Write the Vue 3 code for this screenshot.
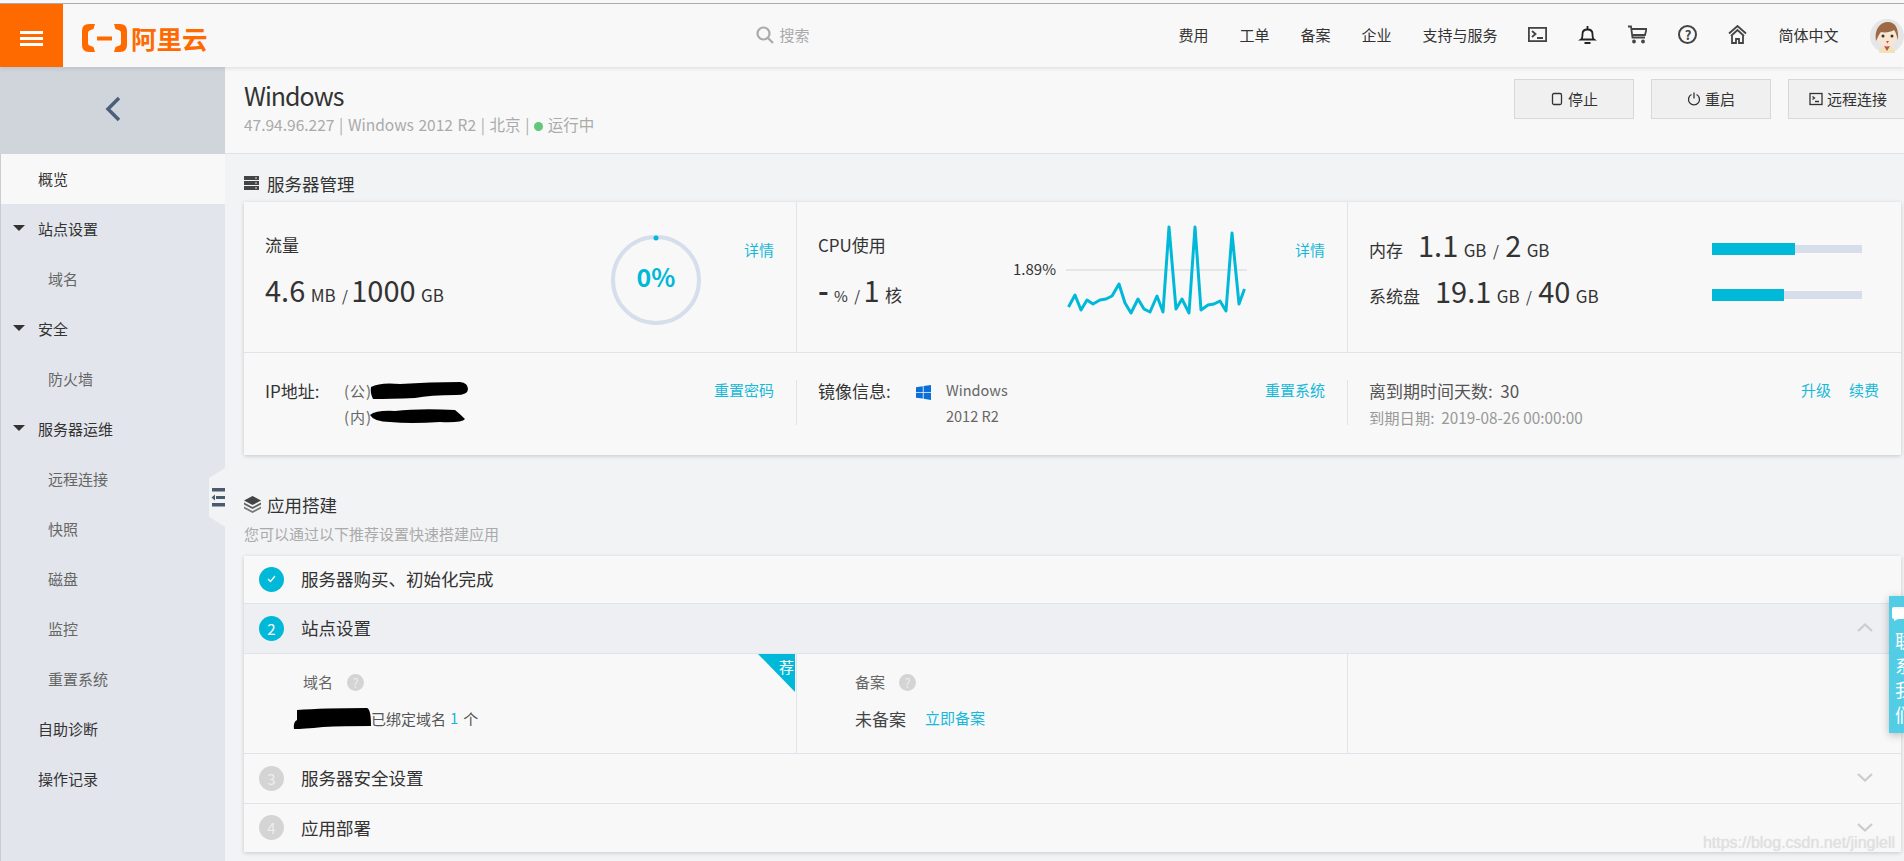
<script setup>
const nav = ['费用', '工单', '备案', '企业', '支持与服务']

const menu = [
  { name: '概览', type: 'top', active: true },
  { name: '站点设置', type: 'group' },
  { name: '域名', type: 'sub' },
  { name: '安全', type: 'group' },
  { name: '防火墙', type: 'sub' },
  { name: '服务器运维', type: 'group' },
  { name: '远程连接', type: 'sub' },
  { name: '快照', type: 'sub' },
  { name: '磁盘', type: 'sub' },
  { name: '监控', type: 'sub' },
  { name: '重置系统', type: 'sub' },
  { name: '自助诊断', type: 'top' },
  { name: '操作记录', type: 'top' }
]

// cpu samples, read off the chart
const cpu = [
  [8.5, 87], [15, 75], [21, 90], [27, 80], [33, 84], [40, 80], [46, 79], [52, 76],
  [59, 64], [65, 83], [71, 93], [78, 79], [84, 89], [90, 92], [97, 76], [103, 92],
  [109, 7], [116, 89], [122, 79], [129, 93], [135, 7], [141, 90], [148, 85], [154, 84],
  [160, 81], [166, 91], [172, 13], [179, 84], [184.500, 69]
]
const cpuPoints = cpu.map(p => p.join(',')).join(' ')

const usage = [
  { label: '内存', used: '1.1', total: '2', percent: 55.4 },
  { label: '系统盘', used: '19.1', total: '40', percent: 47.8 }
]
</script>

<template>
  <div class="page">
    <header class="topbar">
      <div class="burger"><i></i><i></i><i></i></div>
      <div class="logo">
        <svg width="45" height="28" viewBox="0 0 45 28">
          <path d="M13 0H7Q0 0 0 7V21Q0 28 7 28H13L11.500 23 7.500 21.500Q6 21 6 19V9Q6 7 7.500 6.500L11.500 5Z" fill="#ff6a00" />
          <path d="M32 0H38Q45 0 45 7V21Q45 28 38 28H32L33.500 23 37.500 21.500Q39 21 39 19V9Q39 7 37.500 6.500L33.500 5Z" fill="#ff6a00" />
          <rect x="15" y="12.500" width="15" height="4" fill="#ff6a00" />
        </svg>
        <span class="logo-text">阿里云</span>
      </div>
      <div class="search">
        <svg width="18" height="18" viewBox="0 0 18 18" fill="none" stroke="#aaa" stroke-width="2.200">
          <circle cx="7.500" cy="7.500" r="6" />
          <path d="M12 12l5 5" />
        </svg>
        <span>搜索</span>
      </div>
      <nav class="nav">
        <a v-for="item in nav" :key="item">{{ item }}</a>
        <svg width="19" height="15" viewBox="0 0 19 15" fill="none" stroke="#444" stroke-width="1.800">
          <rect x="0.900" y="0.900" width="17.200" height="13.200" />
          <path d="M4 4l3.500 3L4 10M9 11h6" />
        </svg>
        <svg width="19" height="19" viewBox="0 0 19 19" fill="none" stroke="#222" stroke-width="1.800">
          <path d="M3 14.500c1.500-1 1.500-2 1.500-5.500 0-3 2-4.500 5-4.500s5 1.500 5 4.500c0 3.500 0 4.500 1.500 5.500z" />
          <path d="M9.500 1v3M6.500 18h6" />
        </svg>
        <svg width="19" height="19" viewBox="0 0 19 19" fill="none" stroke="#444" stroke-width="1.800">
          <path d="M0 1.500h3l1.500 11h12.500M4 4h14.500l-1.500 6H5" />
          <circle cx="6" cy="16.500" r="1" fill="#444" />
          <circle cx="15" cy="16.500" r="1" fill="#444" />
        </svg>
        <span class="help">?</span>
        <svg width="19" height="19" viewBox="0 0 19 19" fill="none" stroke="#444" stroke-width="1.800">
          <path d="M1 8.500L9.500 1 18 8.500M3 11l6.500-6 6.500 6" />
          <path d="M4 11v7h4v-4h3v4h4v-7" />
        </svg>
        <a>简体中文</a>
        <svg class="avatar" width="34" height="34" viewBox="0 0 34 34">
          <circle cx="17" cy="17" r="17" fill="#e6e6e6" />
          <path d="M9 34c0-5 4-7 8-7s8 2 8 7z" fill="#f2e2b8" />
          <path d="M14 27l3 5 3-5z" fill="#c0504d" />
          <ellipse cx="17" cy="17" rx="10" ry="10.500" fill="#f8e6d2" />
          <path d="M6 22C4 8 12 3 18 3c7 0 11 6 10 18-1-3-2-8-4-10-3 2-9 3-13 2-2 2-3 5-5 9z" fill="#9c6b45" />
          <circle cx="13" cy="17" r="1.500" fill="#333" />
          <circle cx="22" cy="17" r="1.500" fill="#333" />
          <path d="M16 22h3l-1.500 2.500z" fill="#c0504d" />
        </svg>
      </nav>
    </header>

    <div class="layout">
      <aside class="sidebar">
        <div class="side-head">
          <svg width="18" height="26" viewBox="0 0 18 26" fill="none" stroke="#4c5f7a" stroke-width="3.500">
            <path d="M15 2L4 13l11 11" />
          </svg>
        </div>
        <div
          v-for="item in menu"
          :key="item.name"
          :class="['menu-item', item.type, { active: item.active }]"
        >
          <i v-if="item.type === 'group'" class="caret"></i>
          {{ item.name }}
        </div>
        <div class="collapse">
          <svg width="16" height="20" viewBox="0 0 16 20" fill="#4c5a70">
            <rect x="3" y="0" width="13" height="3.500" />
            <rect x="7" y="8" width="9" height="3" />
            <path d="M6 6.500v6L2.500 9.500z" />
            <rect x="3" y="15" width="13" height="3.500" />
          </svg>
        </div>
      </aside>

      <main class="main">
        <div class="page-head">
          <div>
            <h1 class="title">Windows</h1>
            <div class="meta">
              47.94.96.227 | Windows 2012 R2 | 北京 | <i class="dot"></i> 运行中
            </div>
          </div>
          <div class="actions">
            <button class="btn">
              <svg width="14" height="14" viewBox="0 0 14 14" fill="none" stroke="#333" stroke-width="1.300">
                <rect x="2.500" y="1.500" width="9" height="11" rx="1.500" />
              </svg>
              停止
            </button>
            <button class="btn">
              <svg width="14" height="14" viewBox="0 0 14 14" fill="none" stroke="#333" stroke-width="1.300">
                <path d="M4.500 2.500a5.500 5.500 0 1 0 5 0M7 0.500v6" />
              </svg>
              重启
            </button>
            <button class="btn">
              <svg width="14" height="14" viewBox="0 0 14 14" fill="none" stroke="#333" stroke-width="1.300">
                <rect x="1" y="1.500" width="12" height="11" />
                <path d="M3.500 4.500l2 1.500-2 1.500M6 9.500h4" />
              </svg>
              远程连接
            </button>
          </div>
        </div>

        <div class="content">
          <div class="section-head">
            <svg width="15" height="14" viewBox="0 0 15 14" fill="#444">
              <rect x="0" y="0" width="15" height="4" />
              <rect x="0" y="5" width="15" height="4" />
              <rect x="0" y="10" width="15" height="4" />
              <rect x="11" y="1.500" width="2" height="1" fill="#ddd" />
              <rect x="11" y="6.500" width="2" height="1" fill="#ddd" />
              <rect x="11" y="11.500" width="2" height="1" fill="#ddd" />
            </svg>
            服务器管理
          </div>

          <section class="card">
            <div class="card-row stats">
              <div class="cell">
                <div class="cell-main">
                  <div class="cell-label">流量</div>
                  <div class="value">
                    <b>4.6</b> <small>MB</small> <em>/</em> <b>1000</b> <small>GB</small>
                  </div>
                </div>
                <div class="ring">
                  <svg width="90" height="90" viewBox="0 0 90 90">
                    <circle cx="45" cy="45" r="43" fill="none" stroke="#d6deeb" stroke-width="4" />
                    <circle cx="45" cy="3" r="2.500" fill="#00b9d8" />
                  </svg>
                  <span>0%</span>
                </div>
                <a class="link detail">详情</a>
              </div>

              <div class="cell">
                <div class="cell-main">
                  <div class="cell-label">CPU使用</div>
                  <div class="value">
                    <b class="dash">-</b> <small class="pct">%</small> <em>/</em> <b>1</b> <small>核</small>
                  </div>
                </div>
                <span class="cpu-label">1.89%</span>
                <svg class="cpu-chart" width="190" height="100" viewBox="0 0 190 100" fill="none">
                  <path d="M6 50h181" stroke="#e6e6e6" stroke-width="2" />
                  <polyline :points="cpuPoints" stroke="#00b9d8" stroke-width="3" stroke-linejoin="round" />
                </svg>
                <a class="link detail">详情</a>
              </div>

              <div class="cell usage">
                <div v-for="row in usage" :key="row.label" class="usage-row">
                  <div class="value">
                    <span class="usage-label">{{ row.label }}</span>
                    <b>{{ row.used }}</b> <small>GB</small> <em>/</em> <b>{{ row.total }}</b> <small>GB</small>
                  </div>
                  <div class="track">
                    <div class="fill" :style="{ width: row.percent + '%' }"></div>
                  </div>
                </div>
              </div>
            </div>

            <div class="card-row infos">
              <div class="info">
                <span class="info-label ip">IP地址:</span>
                <div class="ip-lines">
                  <div class="ip-line">
                    (公)
                    <svg width="98" height="18" viewBox="0 0 98 18">
                      <path d="M1 6Q10 1 30 3 60 1 90 1 98 2 98 8 98 14 86 14 60 14 45 17 20 18 3 18 0 12 1 6Z" fill="#000" />
                    </svg>
                  </div>
                  <div class="ip-line">
                    (内)
                    <svg width="95" height="16" viewBox="0 0 95 16">
                      <path d="M0 7Q6 2 25 3 50 0 85 2 90 6 95 11 92 15 70 14 40 16 20 14 4 14 0 7Z" fill="#000" />
                    </svg>
                  </div>
                </div>
                <a class="link">重置密码</a>
              </div>
              <div class="info">
                <span class="info-label image">镜像信息:</span>
                <svg class="win" width="15" height="15" viewBox="0 0 15 15" fill="#0a6fd8">
                  <path d="M0 2.200L6.800 1.200V7H0zM7.600 1.100L15 0V7H7.600zM0 7.800H6.800V13.600L0 12.700zM7.600 7.800H15V15L7.600 13.800z" />
                </svg>
                <div class="image-name">
                  <div>Windows</div>
                  <div>2012 R2</div>
                </div>
                <a class="link">重置系统</a>
              </div>
              <div class="info">
                <div class="expire">
                  <div class="expire-days">离到期时间天数:&nbsp;&nbsp;30</div>
                  <div class="expire-date">到期日期:&nbsp;&nbsp;2019-08-26 00:00:00</div>
                </div>
                <a class="link">升级</a>
                <a class="link renew">续费</a>
              </div>
            </div>
          </section>

          <div class="section-head second">
            <svg width="17" height="17" viewBox="0 0 17 17" fill="#444">
              <path d="M8.500 0L17 4.500 8.500 9 0 4.500z" />
              <path d="M0 6.500l8.500 4.500L17 6.500v2L8.500 13 0 8.500z" opacity=".85" />
              <path d="M0 10.500L8.500 15 17 10.500v2L8.500 17 0 12.500z" opacity=".7" />
            </svg>
            应用搭建
          </div>
          <p class="section-sub">您可以通过以下推荐设置快速搭建应用</p>

          <section class="steps">
            <div class="step first">
              <span class="badge">
                <svg width="9" height="8" viewBox="0 0 9 8" fill="none" stroke="#fff" stroke-width="1.300">
                  <path d="M1 4l2.500 2.500L8 1" />
                </svg>
              </span>
              服务器购买、初始化完成
            </div>
            <div class="step open">
              <span class="badge">2</span>
              站点设置
              <svg class="chevron" width="16" height="9" viewBox="0 0 16 9" fill="none" stroke="#ccc" stroke-width="2.200">
                <path d="M1 8l7-6.500L15 8" />
              </svg>
            </div>
            <div class="step-body">
              <div class="pane domain">
                <div class="pane-title">域名 <span class="tip">?</span></div>
                <div class="pane-line">
                  <svg class="blob" width="78" height="21" viewBox="0 0 78 21">
                    <path d="M4 2Q30 0 74 0 78 1 78 18 50 18 30 19 10 21 1 21 0 14 4 12Z" fill="#000" />
                  </svg>
                  <span>已绑定域名</span>
                  <a class="link count">1</a>
                  <span>个</span>
                </div>
                <div class="corner"><span>荐</span></div>
              </div>
              <div class="pane record">
                <div class="pane-title">备案 <span class="tip">?</span></div>
                <div class="pane-line">
                  <span class="status">未备案</span>
                  <a class="link">立即备案</a>
                </div>
              </div>
              <div class="pane"></div>
            </div>
            <div class="step idle">
              <span class="badge">3</span>
              服务器安全设置
              <svg class="chevron" width="16" height="9" viewBox="0 0 16 9" fill="none" stroke="#ccc" stroke-width="2.200">
                <path d="M1 1l7 6.500L15 1" />
              </svg>
            </div>
            <div class="step idle last">
              <span class="badge">4</span>
              应用部署
              <svg class="chevron" width="16" height="9" viewBox="0 0 16 9" fill="none" stroke="#ccc" stroke-width="2.200">
                <path d="M1 1l7 6.500L15 1" />
              </svg>
            </div>
          </section>
        </div>
      </main>
    </div>

    <div class="contact">
      <div class="contact-inner">
        <svg width="18" height="14" viewBox="0 0 18 14" fill="#fff">
          <path d="M2 0h14q2 0 2 2v8q0 2-2 2H6l-4 2v-2q-2 0-2-2V2q0-2 2-2z" />
        </svg>
        <span>联</span><span>系</span><span>我</span><span>们</span>
      </div>
    </div>
    <div class="watermark">https://blog.csdn.net/jinglell</div>
  </div>
</template>

<style>
html, body {
  margin: 0;
  overflow: hidden;
}
</style>

<style scoped>
.page {
  position: relative;
  width: 1904px;
  height: 861px;
  overflow: hidden;
  background: #f2f3f5;
  color: #333;
  font-family: "Noto Sans CJK SC", "Noto Sans", sans-serif;
  font-size: 15px;
}

.topbar {
  position: relative;
  z-index: 2;
  display: flex;
  align-items: center;
  box-sizing: border-box;
  height: 67px;
  padding: 4px 0 2px;
  background: linear-gradient(#f8f8f8 3px, #aaa 3px, #aaa 4px, #f8f8f8 4px);
  box-shadow: 0 1px 5px rgba(0, 0, 0, 0.12);
}

.burger {
  display: flex;
  flex-direction: column;
  justify-content: center;
  gap: 3px;
  align-self: stretch;
  width: 63px;
  margin-bottom: -2px;
  padding: 6px 0 0 20px;
  box-sizing: border-box;
  background: #ff6a00;
}

.burger i {
  display: block;
  width: 23px;
  height: 3px;
  background: #fff;
}

.logo {
  display: flex;
  align-items: center;
  gap: 4px;
  margin: 7px 0 0 19px;
}

.logo-text {
  color: #ff6a00;
  font-size: 25.500px;
  font-weight: 700;
  line-height: 28px;
}

.search {
  display: flex;
  align-items: center;
  gap: 6px;
  margin-left: 548px;
  color: #aaa;
}

.nav {
  display: flex;
  align-items: center;
  gap: 31px;
  margin-left: auto;
  color: #333;
}

.help {
  box-sizing: border-box;
  width: 19px;
  height: 19px;
  border: 2px solid #444;
  border-radius: 50%;
  font-size: 13px;
  font-weight: 700;
  line-height: 15px;
  text-align: center;
  color: #444;
}

.avatar {
  margin: 3px 0 0 0.500px;
}

.layout {
  display: flex;
  height: 794px;
}

.sidebar {
  position: relative;
  flex: none;
  box-sizing: border-box;
  width: 225px;
  border-left: 1px solid #c9cdd3;
  background: #e2e5eb;
}

.side-head {
  display: flex;
  align-items: center;
  justify-content: center;
  box-sizing: border-box;
  height: 87px;
  margin-left: -1px;
  padding-bottom: 3px;
  background: #d0d5dc;
}

.menu-item {
  display: flex;
  align-items: center;
  box-sizing: border-box;
  height: 50px;
  padding: 0 0 2px 37px;
}

.menu-item.active {
  background: #f8f8f8;
}

.menu-item.group {
  padding-left: 12px;
}

.menu-item.sub {
  padding-left: 47px;
  color: #666;
}

.caret {
  width: 0;
  height: 0;
  margin-right: 13px;
  border-top: 6px solid #333;
  border-left: 6px solid transparent;
  border-right: 6px solid transparent;
}

.collapse {
  position: absolute;
  top: 401px;
  right: 0;
  display: flex;
  align-items: center;
  justify-content: flex-end;
  width: 16px;
  height: 59px;
  background: #f2f3f5;
  clip-path: polygon(100% 0, 0 17%, 0 82%, 100% 100%);
}

.main {
  flex: 1;
  min-width: 0;
}

.page-head {
  display: flex;
  justify-content: space-between;
  box-sizing: border-box;
  height: 87px;
  padding-left: 19px;
  border-bottom: 1px solid #e0e2e6;
  background: #f8f8f8;
}

.title {
  margin: 10px 0 0;
  font-size: 25px;
  font-weight: 400;
  letter-spacing: -1px;
  line-height: 36px;
  color: #333;
}

.meta {
  margin-top: 0;
  font-size: 15.500px;
  word-spacing: 1.200px;
  line-height: 22px;
  color: #aaa;
}

.dot {
  display: inline-block;
  width: 9px;
  height: 9px;
  border-radius: 50%;
  background: #62c77a;
}

.actions {
  display: flex;
  flex: none;
  gap: 17px;
  margin: 12px -4px 0 0;
}

.btn {
  display: flex;
  align-items: center;
  justify-content: center;
  gap: 4px;
  box-sizing: border-box;
  width: 120px;
  height: 40px;
  padding: 0 0 1px;
  border: 1px solid #d8d8d8;
  background: #f0f0f0;
  color: #333;
  font: inherit;
}

.content {
  padding: 0 3px 0 19px;
}

.section-head {
  display: flex;
  align-items: center;
  gap: 8px;
  height: 36px;
  padding-top: 11px;
  padding-bottom: 1px;
  font-size: 17.500px;
}

.section-head.second {
  height: 24px;
  margin-top: 37px;
  padding: 0;
  gap: 6px;
}

.section-sub {
  margin: 8px 0 12px;
  line-height: 20px;
  color: #aaa;
}

.card,
.steps {
  background: #f8f8f8;
  box-shadow: 0 1px 4px rgba(0, 0, 0, 0.18);
}

.card-row {
  display: grid;
  grid-template-columns: 552px 551px 1fr;
}

.stats {
  box-sizing: border-box;
  height: 151px;
  border-bottom: 1px solid #e0e4ea;
}

.cell {
  display: flex;
  align-items: flex-start;
  box-sizing: border-box;
  padding: 0 22px 0 21px;
}

.cell + .cell {
  border-left: 1px solid #e0e4ea;
}

.cell-main {
  flex: 1;
  padding-top: 29px;
}

.cell-label {
  font-size: 17px;
  line-height: 28px;
}

.value {
  margin-top: 12px;
  line-height: 36px;
  white-space: nowrap;
  color: #333;
}

.value b {
  font-size: 29px;
  font-weight: 400;
}

.value small {
  margin-left: 2px;
  font-size: 17px;
}

.value em {
  margin: 0 3px;
  font-size: 15px;
  font-style: normal;
}

.cell-main .value em {
  margin-right: 0;
}

.value .dash {
  font-weight: 700;
}

.value .pct {
  font-size: 15px;
}

.ring {
  position: relative;
  flex: none;
  width: 90px;
  height: 90px;
  margin: 33px 43px 0 0;
}

.ring svg {
  display: block;
}

.ring span {
  position: absolute;
  left: 0;
  right: 0;
  top: 24px;
  font-size: 25px;
  font-weight: 700;
  line-height: 34px;
  text-align: center;
  color: #00b9d8;
}

.link {
  flex: none;
  line-height: 20px;
  color: #16b9d9;
}

.detail {
  margin-top: 38px;
}

.cpu-label {
  flex: none;
  margin: 57px 4px 0 0;
  line-height: 20px;
}

.cpu-chart {
  flex: none;
  margin: 18px 45px 0 0;
  overflow: visible;
}

.usage {
  display: block;
  padding: 24px 39px 0 21px;
}

.usage-row {
  display: flex;
  align-items: center;
  justify-content: space-between;
  height: 46px;
}

.usage-row .value {
  margin-top: -4px;
}

.usage-label {
  margin-right: 15px;
  font-size: 17px;
}

.track {
  width: 150px;
  height: 8px;
  background: #d6deeb;
}

.fill {
  height: 12px;
  margin-top: -2px;
  background: #00b9d8;
}

.track::before {
  content: "";
  display: block;
  height: 2px;
  margin-top: -2px;
}

.infos {
  height: 102px;
  padding-top: 27px;
  box-sizing: border-box;
}

.info {
  display: flex;
  align-items: flex-start;
  box-sizing: border-box;
  height: 45px;
  padding: 0 22px 0 21px;
}

.info + .info {
  border-left: 1px solid #e0e4ea;
}

.info-label {
  flex: none;
  margin-top: -1px;
  font-size: 17px;
  line-height: 24px;
}

.info-label.ip {
  width: 79px;
}

.info-label.image {
  width: 98px;
}

.ip-lines {
  flex: 1;
  margin-top: -3px;
  color: #666;
  letter-spacing: 1px;
}

.ip-line {
  display: flex;
  align-items: center;
  height: 26px;
}

.ip-line svg {
  margin-left: -2px;
}

.win {
  flex: none;
  margin: 5px 15px 0 0;
}

.image-name {
  flex: 1;
  margin-top: -3px;
  font-size: 14.500px;
  line-height: 26px;
  color: #666;
}

.expire {
  flex: 1;
  margin-top: -1px;
}

.expire-days {
  font-size: 17px;
  line-height: 24px;
  color: #555;
}

.expire-date {
  margin-top: 3px;
  font-size: 15.300px;
  line-height: 22px;
  color: #999;
}

.renew {
  margin-left: 18px;
}

.step {
  display: flex;
  align-items: center;
  box-sizing: border-box;
  height: 50px;
  padding: 0 28px 2px 15px;
  border-bottom: 1px solid #e0e4ea;
  font-size: 17.500px;
}

.step.first,
.step.last {
  height: 48px;
}

.step.last {
  border-bottom: 0;
}

.step.open {
  background: #eeeff3;
}

.badge {
  display: flex;
  align-items: center;
  justify-content: center;
  flex: none;
  width: 25px;
  height: 25px;
  margin: 1px 17px 0 0;
  border-radius: 50%;
  background: #00b9d8;
  color: #fff;
  font-size: 15px;
}

.step.idle .badge {
  background: #d4d4d4;
  color: #eee;
}

.chevron {
  margin-left: auto;
}

.step-body {
  display: grid;
  grid-template-columns: 552px 551px 1fr;
  height: 100px;
  border-bottom: 1px solid #e0e4ea;
  box-sizing: border-box;
}

.pane {
  position: relative;
  box-sizing: border-box;
  padding-top: 18px;
}

.pane + .pane {
  border-left: 1px solid #e0e4ea;
}

.pane.domain {
  padding-left: 59px;
}

.pane.record {
  padding-left: 58px;
}

.pane-title {
  display: flex;
  align-items: center;
  gap: 14px;
  line-height: 20px;
  color: #666;
}

.tip {
  width: 17px;
  height: 17px;
  border-radius: 50%;
  background: #d4d4d4;
  color: #eee;
  font-size: 13px;
  line-height: 17px;
  text-align: center;
}

.pane-line {
  display: flex;
  align-items: center;
  height: 24px;
  margin-top: 14px;
  color: #555;
}

.blob {
  flex: none;
  margin-left: -10px;
}

.count {
  margin: 0 5px 0 4px;
}

.status {
  margin-right: 19px;
  font-size: 17px;
  color: #444;
}

.corner {
  position: absolute;
  top: 0;
  right: 1px;
  width: 37px;
  height: 38px;
  background: #00b9d8;
  clip-path: polygon(0 0, 100% 0, 100% 100%);
}

.corner span {
  position: absolute;
  top: 3px;
  right: 1px;
  color: #fff;
  font-size: 15px;
  line-height: 20px;
}

.contact {
  position: absolute;
  top: 596px;
  left: 1889px;
  width: 15px;
  height: 137px;
  overflow: hidden;
  background: #52cde5;
  box-shadow: 0 2px 8px rgba(0, 0, 0, 0.25);
}

.contact-inner {
  width: 40px;
  padding: 11px 0 0 3px;
  color: #fff;
}

.contact-inner svg {
  display: block;
  margin-bottom: 7px;
}

.contact-inner span {
  display: block;
  padding-left: 3px;
  font-size: 18px;
  line-height: 24.700px;
}

.watermark {
  position: absolute;
  right: 9px;
  top: 831px;
  font-family: "Liberation Sans", sans-serif;
  font-size: 16px;
  line-height: 24px;
  color: #e0e0e0;
  text-shadow: 0 0 1px #ddd;
}
</style>
